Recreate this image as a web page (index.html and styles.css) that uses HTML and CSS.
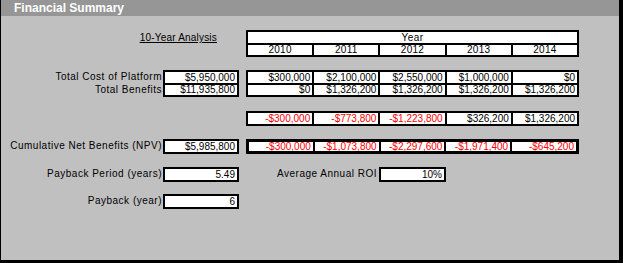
FILE: index.html
```html
<!DOCTYPE html>
<html lang="en">
<head>
    <meta charset="UTF-8">
    <title>Financial Summary</title>
    <link rel="stylesheet" href="styles.css">
</head>
<body>

    <div class="sheet">
        <!-- Header bar -->
        <div class="title-bar">Financial Summary</div>

        <div class="summary">
            <div class="caption">10-Year Analysis</div>

            <!-- Year header -->
            <div class="block years">
                <div class="line head">Year</div>
                <div class="line">
                    <span class="cell">2010</span>
                    <span class="cell">2011</span>
                    <span class="cell">2012</span>
                    <span class="cell">2013</span>
                    <span class="cell">2014</span>
                </div>
            </div>

            <!-- Cost and benefit totals -->
            <div class="labels totals-labels">
                <div>Total Cost of Platform</div>
                <div>Total Benefits</div>
            </div>
            <div class="block totals">
                <div class="line"><span class="cell num">$5,950,000</span></div>
                <div class="line"><span class="cell num">$11,935,800</span></div>
            </div>
            <div class="block yearly">
                <div class="line">
                    <span class="cell num">$300,000</span>
                    <span class="cell num">$2,100,000</span>
                    <span class="cell num">$2,550,000</span>
                    <span class="cell num">$1,000,000</span>
                    <span class="cell num">$0</span>
                </div>
                <div class="line">
                    <span class="cell num">$0</span>
                    <span class="cell num">$1,326,200</span>
                    <span class="cell num">$1,326,200</span>
                    <span class="cell num">$1,326,200</span>
                    <span class="cell num">$1,326,200</span>
                </div>
            </div>

            <!-- Net per year -->
            <div class="block net">
                <div class="line">
                    <span class="cell num neg">-$300,000</span>
                    <span class="cell num neg">-$773,800</span>
                    <span class="cell num neg">-$1,223,800</span>
                    <span class="cell num">$326,200</span>
                    <span class="cell num">$1,326,200</span>
                </div>
            </div>

            <!-- Cumulative NPV -->
            <div class="labels npv-label">Cumulative Net Benefits (NPV)</div>
            <div class="block npv-total">
                <div class="line"><span class="cell num">$5,985,800</span></div>
            </div>
            <div class="block npv">
                <div class="line">
                    <span class="cell num neg">-$300,000</span>
                    <span class="cell num neg">-$1,073,800</span>
                    <span class="cell num neg">-$2,297,600</span>
                    <span class="cell num neg">-$1,971,400</span>
                    <span class="cell num neg">-$645,200</span>
                </div>
            </div>

            <!-- Payback and ROI -->
            <div class="labels period-label">Payback Period (years)</div>
            <div class="block period">
                <div class="line"><span class="cell num">5.49</span></div>
            </div>
            <div class="roi">
                <span class="roi-label">Average Annual ROI</span>
                <div class="block roi-box">
                    <div class="line"><span class="cell num">10%</span></div>
                </div>
            </div>

            <div class="labels year-label">Payback (year)</div>
            <div class="block payback-year">
                <div class="line"><span class="cell num">6</span></div>
            </div>
        </div>
    </div>

</body>
</html>
```

FILE: styles.css
```css
body {
    margin: 0;
    padding: 0;
    font-family: "Liberation Sans", Arial, sans-serif;
    font-size: 10px;
    color: #000;
}

/* Outer frame */
.sheet {
    width: 623px;
    height: 263px;
    box-sizing: border-box;
    background-color: #c0c0c0;
    border-left: 1px solid #000;
    border-right: 4px solid #000;
    border-bottom: 3px solid #000;
}

.title-bar {
    height: 16px;
    background-color: #969696;
    color: #fff;
    font-size: 12px;
    font-weight: bold;
    line-height: 16px;
    padding-left: 13px;
}

/* Main grid: label | total | spacer | five year columns */
.summary {
    display: grid;
    grid-template-columns: 162px 76px 7px 333px;
    grid-template-rows: 27px 13px 27px 14px 15px 13px 15px 13px 15px 12px 15px;
    padding-top: 14px;
}

.caption {
    grid-column: 1 / 3;
    grid-row: 1;
    text-align: right;
    padding-right: 22px;
    text-decoration: underline;
    letter-spacing: 0.2px;
    line-height: 13px;
    padding-top: 1px;
}

.labels {
    text-align: right;
    padding-right: 1px;
    letter-spacing: 0.5px;
    grid-column: 1;
    line-height: 14px;
}

.totals-labels {
    grid-row: 3;
    display: flex;
    flex-direction: column;
    justify-content: space-around;
    line-height: 12px;
}

.npv-label { grid-row: 7; }
.period-label { grid-row: 9; }
.year-label { grid-row: 11; }

/* White bordered cell groups */
.block {
    background-color: #fff;
    border: 2px solid #000;
    box-sizing: border-box;
    display: flex;
    flex-direction: column;
}

.line {
    flex: 1;
    display: flex;
    min-height: 0;
}

.line + .line {
    border-top: 2px solid #000;
}

.cell {
    flex: 1;
    display: flex;
    align-items: center;
    justify-content: center;
    overflow: hidden;
    letter-spacing: 0.3px;
}

.cell + .cell {
    border-left: 2px solid #000;
}

.num {
    justify-content: flex-end;
    padding-right: 2px;
    letter-spacing: 0;
}

.neg {
    color: #ff0000;
}

.head {
    align-items: center;
    justify-content: center;
    letter-spacing: 0.4px;
}

.years { grid-column: 4; grid-row: 1; }
.totals { grid-column: 2; grid-row: 3; }
.yearly { grid-column: 4; grid-row: 3; }
.net { grid-column: 4; grid-row: 5; }
.npv-total { grid-column: 2; grid-row: 7; }
.npv { grid-column: 4; grid-row: 7; border-width: 3px; }
.npv .cell + .cell { border-left-width: 2px; }
.period { grid-column: 2; grid-row: 9; }
.payback-year { grid-column: 2; grid-row: 11; }

.roi {
    grid-column: 4;
    grid-row: 9;
    display: flex;
}

.roi-label {
    width: 131px;
    text-align: right;
    padding-right: 2px;
    letter-spacing: 0.5px;
    line-height: 14px;
}

.roi-box {
    width: 67px;
}
```
